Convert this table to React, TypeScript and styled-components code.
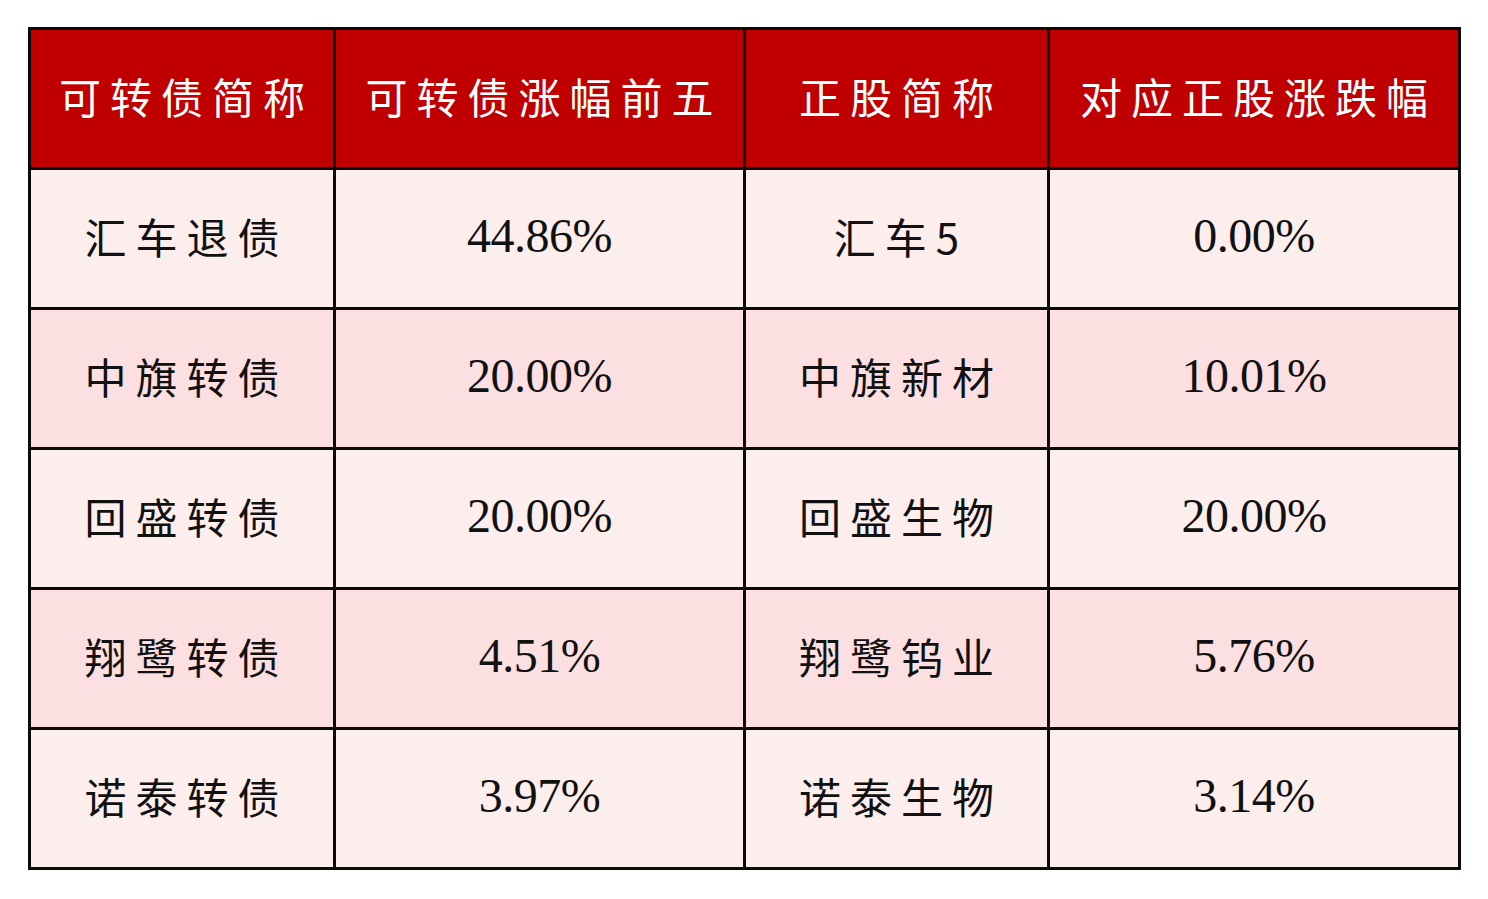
import React from "react";
import styled, { createGlobalStyle } from "styled-components";

const GlobalStyle = createGlobalStyle`
  body {
    margin: 0;
    background: #ffffff;
  }
`;

const headers = ["可转债简称", "可转债涨幅前五", "正股简称", "对应正股涨跌幅"];

const rows = [
  ["汇车退债", "44.86%", "汇车5", "0.00%"],
  ["中旗转债", "20.00%", "中旗新材", "10.01%"],
  ["回盛转债", "20.00%", "回盛生物", "20.00%"],
  ["翔鹭转债", "4.51%", "翔鹭钨业", "5.76%"],
  ["诺泰转债", "3.97%", "诺泰生物", "3.14%"],
];

const isNumber = (s: string) => /^[\d.]+%$/.test(s);

const App = () => (
  <>
    <GlobalStyle />
    <Page>
      <Grid>
        {headers.map((h) => (
          <HeadCell key={h}>
            <CnText>{h}</CnText>
          </HeadCell>
        ))}
        {rows.map((row, i) =>
          row.map((v, j) => (
            <Cell key={`${i}-${j}`} $shade={i % 2 === 1}>
              {isNumber(v) ? <NumText>{v}</NumText> : <CnText>{v}</CnText>}
            </Cell>
          ))
        )}
      </Grid>
    </Page>
  </>
);

const Page = styled.div`
  padding: 27px 0 0 28px;
`;

const Grid = styled.div`
  display: grid;
  grid-template-columns: 302px 407px 301px 408px;
  grid-auto-rows: 137px;
  gap: 3px;
  padding: 3px;
  width: max-content;
  background: #0a0a0a;
`;

const Cell = styled.div<{ $shade?: boolean }>`
  display: flex;
  align-items: center;
  justify-content: center;
  background: ${(p) => (p.$shade ? "#fcdfe0" : "#fdeeee")};
  color: #111111;
`;

const HeadCell = styled(Cell)`
  background: #c00000;
  color: #ffffff;
`;

const CnText = styled.span`
  font-family: "Noto Sans CJK SC", "Noto Sans", sans-serif;
  font-size: 42px;
  line-height: 1;
  font-weight: 400;
  letter-spacing: 9px;
  padding-left: 9px;
  margin-bottom: 6px;
`;

const NumText = styled.span`
  font-family: "Liberation Serif", serif;
  font-size: 48px;
  line-height: 1;
  letter-spacing: -0.5px;
  margin-bottom: 6px;
`;

export default App;
